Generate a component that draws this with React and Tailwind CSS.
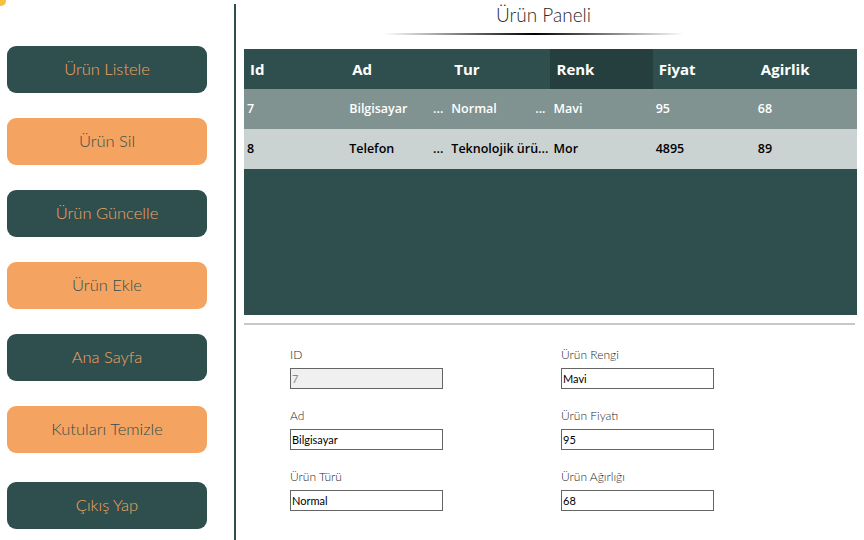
import React from "react";

const menu = [
  { label: "Ürün Listele", dark: true },
  { label: "Ürün Sil", dark: false },
  { label: "Ürün Güncelle", dark: true },
  { label: "Ürün Ekle", dark: false },
  { label: "Ana Sayfa", dark: true },
  { label: "Kutuları Temizle", dark: false },
];

const columns = ["Id", "Ad", "Tur", "Renk", "Fiyat", "Agirlik"];

const rows = [
  { cells: ["7", "Bilgisayar", "Normal", "Mavi", "95", "68"], cut: [false, true, true], light: false },
  { cells: ["8", "Telefon", "Teknolojik ürü...", "Mor", "4895", "89"], cut: [false, true, false], light: true },
];

function MenuButton({ label, dark }) {
  return (
    <button
      className={`w-[200px] h-[47px] rounded-[9px] text-[16.5px] font-light ${
        dark ? "bg-[#2f4f4f] text-[#f4a460]" : "bg-[#f4a460] text-[#2f4f4f]"
      }`}
    >
      {label}
    </button>
  );
}

function Field({ label, value, disabled }) {
  return (
    <div className="flex flex-col">
      <span className="text-[12px] font-light text-[#1f1f1f] h-[15px] leading-[15px]">{label}</span>
      <div
        className={`mt-[6px] w-[153px] h-[21px] border border-[#646464] px-[1px] text-[11px] leading-[19px] ${
          disabled ? "bg-[#f0f0f0] text-[#8a8a8a]" : "bg-white text-black"
        }`}
      >
        {value}
      </div>
    </div>
  );
}

export default function App() {
  return (
    <div className="relative w-[864px] h-[540px] bg-white flex overflow-hidden font-['Lato',sans-serif]">
      <div className="absolute -top-[4px] -left-[4px] w-[10px] h-[10px] rounded-full bg-[#f7c23a]" />

      {/* sidebar */}
      <div className="w-[234px] shrink-0 pl-[7px] pt-[46px] flex flex-col">
        <div className="flex flex-col gap-[25px]">
          {menu.map((m) => (
            <MenuButton key={m.label} label={m.label} dark={m.dark} />
          ))}
        </div>
        <div className="mt-[29px]">
          <MenuButton label="Çıkış Yap" dark />
        </div>
      </div>

      <div className="w-[2px] bg-[#2f4f4f] mt-[4px] shrink-0" />

      {/* main */}
      <div className="flex-1 flex flex-col pl-[8px] pr-[7px]">
        <div className="h-[45px] flex flex-col items-center -ml-[14px]">
          <div className="mt-[3px] text-[19px] font-light text-[#2a2a2a] leading-[24px]">Ürün Paneli</div>
          <div className="mt-[6px] -ml-[20px] w-[300px] h-[2px] bg-gradient-to-r from-transparent via-black to-transparent" />
        </div>

        <div className="mt-[4px] w-[613px] h-[266px] bg-[#2f4f4f] font-['Open_Sans',sans-serif]">
          <div className="grid grid-cols-6 h-[40px] text-white text-[15px] font-bold">
            {columns.map((c) => (
              <div
                key={c}
                className={`flex items-center pl-[6px] ${c === "Renk" ? "bg-[#253f3f]" : ""}`}
              >
                {c}
              </div>
            ))}
          </div>
          {rows.map((r, i) => (
            <div
              key={i}
              className={`grid grid-cols-6 h-[40px] text-[12.5px] font-semibold ${
                r.light ? "bg-[#cad3d2] text-black" : "bg-[#809391] text-white"
              }`}
            >
              {r.cells.map((c, j) => (
                <div key={j} className="flex items-center justify-between pl-[3px] pr-[5px] whitespace-nowrap">
                  <span>{c}</span>
                  {r.cut[j] && <span>...</span>}
                </div>
              ))}
            </div>
          ))}
        </div>

        <div className="mt-[8px] w-[611px] h-[2px] bg-[#c8c8c8]" />

        <div className="mt-[22px] pl-[46px] flex gap-[118px]">
          <div className="flex flex-col gap-[19px]">
            <Field label="ID" value="7" disabled />
            <Field label="Ad" value="Bilgisayar" />
            <Field label="Ürün Türü" value="Normal" />
          </div>
          <div className="flex flex-col gap-[19px]">
            <Field label="Ürün Rengi" value="Mavi" />
            <Field label="Ürün Fiyatı" value="95" />
            <Field label="Ürün Ağırlığı" value="68" />
          </div>
        </div>
      </div>
    </div>
  );
}
